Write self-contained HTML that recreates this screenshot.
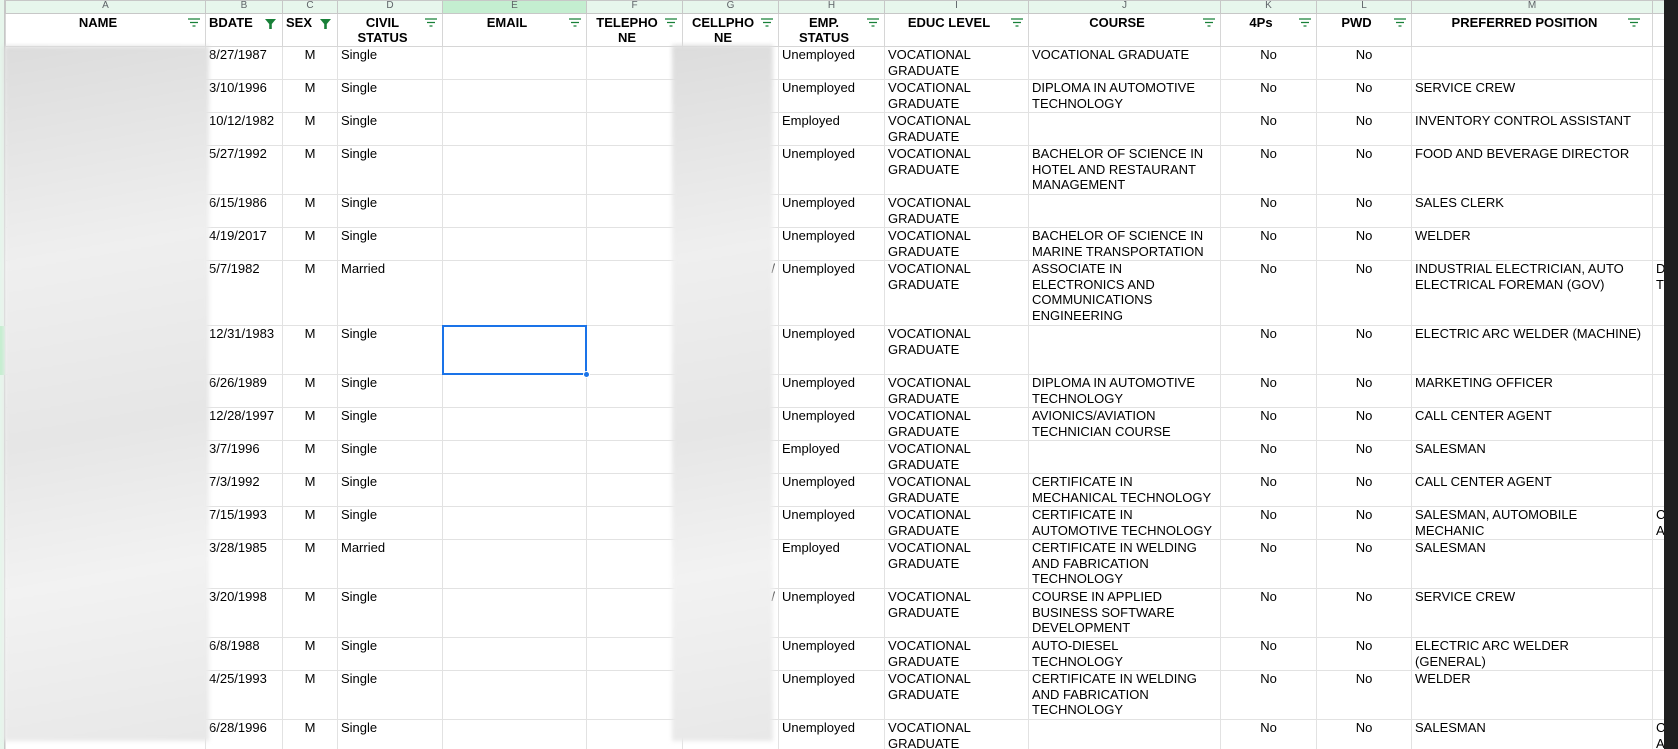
<!DOCTYPE html>
<html><head><meta charset="utf-8"><style>
*{box-sizing:border-box;margin:0;padding:0}
body{width:1678px;height:749px;overflow:hidden;background:#fff;font-family:"Liberation Sans",Arial,sans-serif;font-size:13px;color:#000;position:relative}
#wrap{position:absolute;left:0;top:0;width:1664px;height:749px;overflow:hidden}
#rh{position:absolute;left:0;top:0;width:5px;height:749px;background:#e7f6ec;border-right:1px solid #c7c7c7}
#rhsel{position:absolute;left:0;top:326px;width:5px;height:49px;background:#c4eed0}
table{position:absolute;left:5px;top:0;border-collapse:collapse;table-layout:fixed;width:1767px}
td{border:1px solid #e2e2e2;vertical-align:top;padding:0 3px 0 3px;line-height:15.5px;white-space:nowrap;overflow:hidden}
tr.let td{height:13px;background:#e7f6ec;color:#5f6368;font-size:10px;line-height:10px;text-align:center;padding:0;border-color:#c7c7c7;border-bottom:1px solid #c7c7c7}
tr.let td.sel{background:#c4eed0}
tr.hd td{height:33px;font-weight:bold;text-align:center;position:relative;border-color:#d6d6d6;padding:1px 18px 0 3px;line-height:15px}
tr.hd td.l{text-align:left}
.fi{position:absolute;right:5px;top:4px}
.c{text-align:center}
#dark{position:absolute;left:1664px;top:0;width:14px;height:749px;background:#1f1f1f}
.blur{position:absolute;background:linear-gradient(170deg,#dcdcdc,#efefef 30%,#e6e6e6 55%,#f2f2f2 75%,#e8e8e8);filter:blur(2px)}
#selbox{position:absolute;left:442px;top:325px;width:145px;height:50px;border:2px solid #1a73e8}
#dot{position:absolute;left:583px;top:371px;width:7px;height:7px;border-radius:50%;background:#1a73e8;border:1px solid #fff}
</style></head><body>
<div id="wrap">
<div id="rh"></div><div id="rhsel"></div>
<table>
<colgroup><col style="width:200px"><col style="width:77px"><col style="width:55px"><col style="width:105px"><col style="width:144px"><col style="width:96px"><col style="width:96px"><col style="width:106px"><col style="width:144px"><col style="width:192px"><col style="width:96px"><col style="width:95px"><col style="width:241px"><col style="width:120px"></colgroup>
<tr class="let"><td>A</td><td>B</td><td>C</td><td>D</td><td class="sel">E</td><td>F</td><td>G</td><td>H</td><td>I</td><td>J</td><td>K</td><td>L</td><td>M</td><td>N</td></tr>
<tr class="hd">
<td>NAME<svg class="fi" width="12" height="9" viewBox="0 0 12 9"><path d="M0 1h12M2 4.5h8M4.5 8h3" stroke="#188038" stroke-width="1.3"/></svg></td>
<td class="l">BDATE<svg class="fi" style="right:6px;top:5px" width="11" height="10" viewBox="0 0 11 10"><path d="M0 0h11L6.8 5v5H4.2V5z" fill="#188038"/></svg></td>
<td class="l">SEX<svg class="fi" style="right:6px;top:5px" width="11" height="10" viewBox="0 0 11 10"><path d="M0 0h11L6.8 5v5H4.2V5z" fill="#188038"/></svg></td>
<td>CIVIL<br>STATUS<svg class="fi" width="12" height="9" viewBox="0 0 12 9"><path d="M0 1h12M2 4.5h8M4.5 8h3" stroke="#188038" stroke-width="1.3"/></svg></td>
<td>EMAIL<svg class="fi" width="12" height="9" viewBox="0 0 12 9"><path d="M0 1h12M2 4.5h8M4.5 8h3" stroke="#188038" stroke-width="1.3"/></svg></td>
<td>TELEPHO<br>NE<svg class="fi" width="12" height="9" viewBox="0 0 12 9"><path d="M0 1h12M2 4.5h8M4.5 8h3" stroke="#188038" stroke-width="1.3"/></svg></td>
<td>CELLPHO<br>NE<svg class="fi" width="12" height="9" viewBox="0 0 12 9"><path d="M0 1h12M2 4.5h8M4.5 8h3" stroke="#188038" stroke-width="1.3"/></svg></td>
<td>EMP.<br>STATUS<svg class="fi" width="12" height="9" viewBox="0 0 12 9"><path d="M0 1h12M2 4.5h8M4.5 8h3" stroke="#188038" stroke-width="1.3"/></svg></td>
<td>EDUC LEVEL<svg class="fi" width="12" height="9" viewBox="0 0 12 9"><path d="M0 1h12M2 4.5h8M4.5 8h3" stroke="#188038" stroke-width="1.3"/></svg></td>
<td>COURSE<svg class="fi" width="12" height="9" viewBox="0 0 12 9"><path d="M0 1h12M2 4.5h8M4.5 8h3" stroke="#188038" stroke-width="1.3"/></svg></td>
<td>4Ps<svg class="fi" width="12" height="9" viewBox="0 0 12 9"><path d="M0 1h12M2 4.5h8M4.5 8h3" stroke="#188038" stroke-width="1.3"/></svg></td>
<td>PWD<svg class="fi" width="12" height="9" viewBox="0 0 12 9"><path d="M0 1h12M2 4.5h8M4.5 8h3" stroke="#188038" stroke-width="1.3"/></svg></td>
<td>PREFERRED POSITION<svg class="fi" style="right:12px" width="12" height="9" viewBox="0 0 12 9"><path d="M0 1h12M2 4.5h8M4.5 8h3" stroke="#188038" stroke-width="1.3"/></svg></td>
<td></td></tr>
<tr style="height:33px"><td></td><td>8/27/1987</td><td class="c">M</td><td>Single</td><td></td><td></td><td></td><td>Unemployed</td><td>VOCATIONAL<br>GRADUATE</td><td>VOCATIONAL GRADUATE</td><td class="c">No</td><td class="c">No</td><td></td><td></td></tr>
<tr style="height:33px"><td></td><td>3/10/1996</td><td class="c">M</td><td>Single</td><td></td><td></td><td></td><td>Unemployed</td><td>VOCATIONAL<br>GRADUATE</td><td>DIPLOMA IN AUTOMOTIVE<br>TECHNOLOGY</td><td class="c">No</td><td class="c">No</td><td>SERVICE CREW</td><td></td></tr>
<tr style="height:33px"><td></td><td>10/12/1982</td><td class="c">M</td><td>Single</td><td></td><td></td><td></td><td>Employed</td><td>VOCATIONAL<br>GRADUATE</td><td></td><td class="c">No</td><td class="c">No</td><td>INVENTORY CONTROL ASSISTANT</td><td></td></tr>
<tr style="height:49px"><td></td><td>5/27/1992</td><td class="c">M</td><td>Single</td><td></td><td></td><td></td><td>Unemployed</td><td>VOCATIONAL<br>GRADUATE</td><td>BACHELOR OF SCIENCE IN<br>HOTEL AND RESTAURANT<br>MANAGEMENT</td><td class="c">No</td><td class="c">No</td><td>FOOD AND BEVERAGE DIRECTOR</td><td></td></tr>
<tr style="height:33px"><td></td><td>6/15/1986</td><td class="c">M</td><td>Single</td><td></td><td></td><td></td><td>Unemployed</td><td>VOCATIONAL<br>GRADUATE</td><td></td><td class="c">No</td><td class="c">No</td><td>SALES CLERK</td><td></td></tr>
<tr style="height:33px"><td></td><td>4/19/2017</td><td class="c">M</td><td>Single</td><td></td><td></td><td></td><td>Unemployed</td><td>VOCATIONAL<br>GRADUATE</td><td>BACHELOR OF SCIENCE IN<br>MARINE TRANSPORTATION</td><td class="c">No</td><td class="c">No</td><td>WELDER</td><td></td></tr>
<tr style="height:65px"><td></td><td>5/7/1982</td><td class="c">M</td><td>Married</td><td></td><td></td><td style="text-align:right">/</td><td>Unemployed</td><td>VOCATIONAL<br>GRADUATE</td><td>ASSOCIATE IN<br>ELECTRONICS AND<br>COMMUNICATIONS<br>ENGINEERING</td><td class="c">No</td><td class="c">No</td><td>INDUSTRIAL ELECTRICIAN, AUTO<br>ELECTRICAL FOREMAN (GOV)</td><td>D<br>T</td></tr>
<tr style="height:49px"><td></td><td>12/31/1983</td><td class="c">M</td><td>Single</td><td></td><td></td><td></td><td>Unemployed</td><td>VOCATIONAL<br>GRADUATE</td><td></td><td class="c">No</td><td class="c">No</td><td>ELECTRIC ARC WELDER (MACHINE)</td><td></td></tr>
<tr style="height:33px"><td></td><td>6/26/1989</td><td class="c">M</td><td>Single</td><td></td><td></td><td></td><td>Unemployed</td><td>VOCATIONAL<br>GRADUATE</td><td>DIPLOMA IN AUTOMOTIVE<br>TECHNOLOGY</td><td class="c">No</td><td class="c">No</td><td>MARKETING OFFICER</td><td></td></tr>
<tr style="height:33px"><td></td><td>12/28/1997</td><td class="c">M</td><td>Single</td><td></td><td></td><td></td><td>Unemployed</td><td>VOCATIONAL<br>GRADUATE</td><td>AVIONICS/AVIATION<br>TECHNICIAN COURSE</td><td class="c">No</td><td class="c">No</td><td>CALL CENTER AGENT</td><td></td></tr>
<tr style="height:33px"><td></td><td>3/7/1996</td><td class="c">M</td><td>Single</td><td></td><td></td><td></td><td>Employed</td><td>VOCATIONAL<br>GRADUATE</td><td></td><td class="c">No</td><td class="c">No</td><td>SALESMAN</td><td></td></tr>
<tr style="height:33px"><td></td><td>7/3/1992</td><td class="c">M</td><td>Single</td><td></td><td></td><td></td><td>Unemployed</td><td>VOCATIONAL<br>GRADUATE</td><td>CERTIFICATE IN<br>MECHANICAL TECHNOLOGY</td><td class="c">No</td><td class="c">No</td><td>CALL CENTER AGENT</td><td></td></tr>
<tr style="height:33px"><td></td><td>7/15/1993</td><td class="c">M</td><td>Single</td><td></td><td></td><td></td><td>Unemployed</td><td>VOCATIONAL<br>GRADUATE</td><td>CERTIFICATE IN<br>AUTOMOTIVE TECHNOLOGY</td><td class="c">No</td><td class="c">No</td><td>SALESMAN, AUTOMOBILE<br>MECHANIC</td><td>C<br>A</td></tr>
<tr style="height:49px"><td></td><td>3/28/1985</td><td class="c">M</td><td>Married</td><td></td><td></td><td></td><td>Employed</td><td>VOCATIONAL<br>GRADUATE</td><td>CERTIFICATE IN WELDING<br>AND FABRICATION<br>TECHNOLOGY</td><td class="c">No</td><td class="c">No</td><td>SALESMAN</td><td></td></tr>
<tr style="height:49px"><td></td><td>3/20/1998</td><td class="c">M</td><td>Single</td><td></td><td></td><td style="text-align:right">/</td><td>Unemployed</td><td>VOCATIONAL<br>GRADUATE</td><td>COURSE IN APPLIED<br>BUSINESS SOFTWARE<br>DEVELOPMENT</td><td class="c">No</td><td class="c">No</td><td>SERVICE CREW</td><td></td></tr>
<tr style="height:33px"><td></td><td>6/8/1988</td><td class="c">M</td><td>Single</td><td></td><td></td><td></td><td>Unemployed</td><td>VOCATIONAL<br>GRADUATE</td><td>AUTO-DIESEL<br>TECHNOLOGY</td><td class="c">No</td><td class="c">No</td><td>ELECTRIC ARC WELDER<br>(GENERAL)</td><td></td></tr>
<tr style="height:49px"><td></td><td>4/25/1993</td><td class="c">M</td><td>Single</td><td></td><td></td><td></td><td>Unemployed</td><td>VOCATIONAL<br>GRADUATE</td><td>CERTIFICATE IN WELDING<br>AND FABRICATION<br>TECHNOLOGY</td><td class="c">No</td><td class="c">No</td><td>WELDER</td><td></td></tr>
<tr style="height:49px"><td></td><td>6/28/1996</td><td class="c">M</td><td>Single</td><td></td><td></td><td></td><td>Unemployed</td><td>VOCATIONAL<br>GRADUATE</td><td></td><td class="c">No</td><td class="c">No</td><td>SALESMAN</td><td>C<br>A</td></tr>
</table>
<div class="blur" style="left:4px;top:46px;width:205px;height:695px"></div>
<div class="blur" style="left:672px;top:45px;width:101px;height:696px"></div>
<div id="selbox"></div><div id="dot"></div>
</div>
<div id="dark"></div>
</body></html>
